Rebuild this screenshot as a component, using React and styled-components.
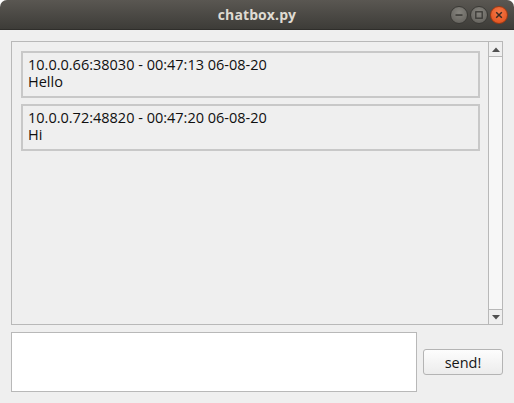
import React from "react";
import styled, { createGlobalStyle } from "styled-components";

const Global = createGlobalStyle`
  html, body { margin: 0; padding: 0; background: #ffffff; }
  body { font-family: "Open Sans", "DejaVu Sans", sans-serif; }
`;

const Window = styled.div`
  width: 514px;
  height: 403px;
  display: flex;
  flex-direction: column;
  background: #efefef;
  border-radius: 7px 7px 0 0;
  overflow: hidden;
`;

const TitleBar = styled.div`
  position: relative;
  height: 30px;
  flex: none;
  display: flex;
  align-items: center;
  justify-content: center;
  background: linear-gradient(#5a5752, #3d3c38);
  border-bottom: 1px solid #2f2e2b;
  box-sizing: border-box;
`;

const Title = styled.div`
  font-family: "Open Sans", sans-serif;
  font-weight: 700;
  font-size: 14px;
  color: #dfdbd2;
  letter-spacing: 0.1px;
`;

const Controls = styled.div`
  position: absolute;
  right: 6px;
  top: 6px;
  display: flex;
  gap: 2px;
`;

const CircleBtn = styled.div`
  width: 18px;
  height: 18px;
  border-radius: 50%;
  box-sizing: border-box;
  display: flex;
  align-items: center;
  justify-content: center;
  border: 1px solid ${(p) => (p.$close ? "#9c3a14" : "#3a3935")};
  background: ${(p) =>
    p.$close
      ? "radial-gradient(circle at 50% 35%, #f47a4a, #df4b16)"
      : "radial-gradient(circle at 50% 35%, #86847e, #5f5d58)"};
`;

const Content = styled.div`
  flex: 1;
  display: flex;
  flex-direction: column;
  padding: 11px 11px 11px 11px;
  gap: 7px;
`;

const Frame = styled.div`
  height: 284px;
  box-sizing: border-box;
  border: 1px solid #b8b8b8;
  display: flex;
  background: #efefef;
`;

const List = styled.div`
  flex: 1;
  display: flex;
  flex-direction: column;
  gap: 6px;
  padding: 9px 8px 9px 9px;
`;

const Message = styled.div`
  height: 47px;
  box-sizing: border-box;
  border: 2px solid #c8c8c8;
  padding: 4px 5px 0 5px;
  font-family: "Open Sans", sans-serif;
  font-size: 14.5px;
  line-height: 16.5px;
  color: #101010;
  white-space: pre-line;
`;

const Scrollbar = styled.div`
  width: 14px;
  box-sizing: border-box;
  border-left: 1px solid #b8b8b8;
  display: flex;
  flex-direction: column;
  background: #f7f7f7;
`;

const Arrow = styled.div`
  height: 14px;
  flex: none;
  display: flex;
  align-items: center;
  justify-content: center;
  background: #efefef;
  ${(p) => (p.$up ? "border-bottom: 1px solid #b8b8b8;" : "border-top: 1px solid #b8b8b8;")}
`;

const Track = styled.div`
  flex: 1;
  background: #f7f7f7;
`;

const Bottom = styled.div`
  display: flex;
  align-items: center;
  gap: 6px;
`;

const Input = styled.div`
  width: 406px;
  height: 60px;
  box-sizing: border-box;
  border: 1px solid #b8b8b8;
  background: #ffffff;
`;

const SendButton = styled.button`
  width: 80px;
  height: 26px;
  box-sizing: border-box;
  border: 1px solid #b4b4b4;
  border-radius: 3px;
  background: linear-gradient(#fdfdfd, #ececec);
  font-family: "Open Sans", sans-serif;
  font-size: 14.5px;
  color: #151515;
  padding: 0;
  display: flex;
  align-items: center;
  justify-content: center;
`;

const messages = [
  { head: "10.0.0.66:38030 - 00:47:13 06-08-20", body: "Hello" },
  { head: "10.0.0.72:48820 - 00:47:20 06-08-20", body: "Hi" },
];

export default function App() {
  return (
    <>
      <Global />
      <Window>
        <TitleBar>
          <Title>chatbox.py</Title>
          <Controls>
            <CircleBtn>
              <svg width="10" height="10" viewBox="0 0 10 10">
                <rect x="1.5" y="4.3" width="7" height="1.5" fill="#3a3935" />
              </svg>
            </CircleBtn>
            <CircleBtn>
              <svg width="10" height="10" viewBox="0 0 10 10">
                <rect x="1.8" y="1.8" width="6.4" height="6.4" fill="none" stroke="#3a3935" strokeWidth="1.3" />
              </svg>
            </CircleBtn>
            <CircleBtn $close>
              <svg width="10" height="10" viewBox="0 0 10 10">
                <path d="M2.2 2.2 L7.8 7.8 M7.8 2.2 L2.2 7.8" stroke="#3a2a22" strokeWidth="1.5" />
              </svg>
            </CircleBtn>
          </Controls>
        </TitleBar>
        <Content>
          <Frame>
            <List>
              {messages.map((m, i) => (
                <Message key={i}>{`${m.head}\n${m.body}`}</Message>
              ))}
            </List>
            <Scrollbar>
              <Arrow $up>
                <svg width="8" height="5" viewBox="0 0 8 5">
                  <path d="M0 5 L4 0.5 L8 5 Z" fill="#505050" />
                </svg>
              </Arrow>
              <Track />
              <Arrow>
                <svg width="8" height="5" viewBox="0 0 8 5">
                  <path d="M0 0 L4 4.5 L8 0 Z" fill="#505050" />
                </svg>
              </Arrow>
            </Scrollbar>
          </Frame>
          <Bottom>
            <Input />
            <SendButton>send!</SendButton>
          </Bottom>
        </Content>
      </Window>
    </>
  );
}
